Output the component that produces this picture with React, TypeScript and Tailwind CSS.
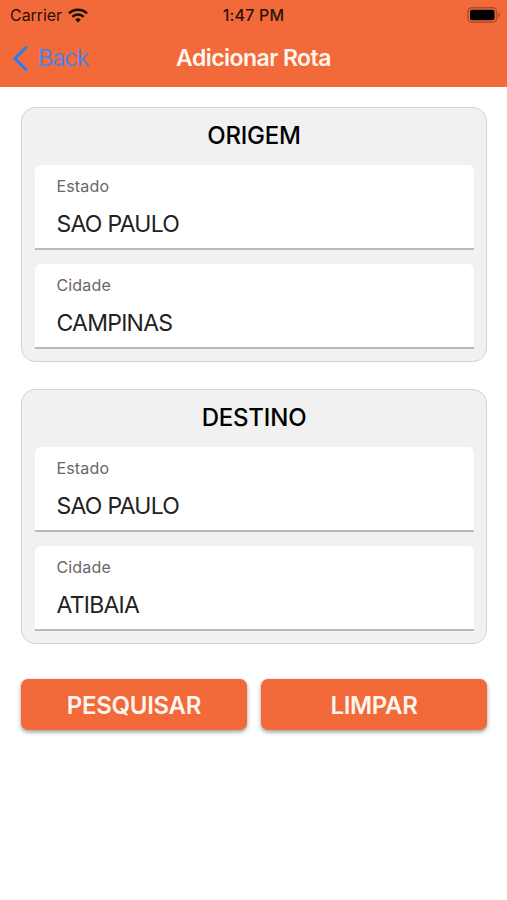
type FieldProps = { label: string; value: string };

function Field({ label, value }: FieldProps) {
  return (
    <div className="h-[85px] rounded-t-md border-b-2 border-[#b9b9b9] bg-white pl-[22px]">
      <p className="pt-[10px] text-base leading-[22px] text-[#686868]">
        <span className="tracking-[0.15px]">{label}</span>
      </p>
      <p className="pt-[12px] text-[23px] leading-[30px] text-[#222]">
        <span className="tracking-[-0.75px]">{value}</span>
      </p>
    </div>
  );
}

type RouteCardProps = { title: string; state: string; city: string };

function RouteCard({ title, state, city }: RouteCardProps) {
  return (
    <section className="h-[255px] rounded-[14px] border-[1.5px] border-[#d3d3d3] bg-[#f1f1f1] px-[12.5px]">
      <h2 className="flex h-[57px] items-center justify-center pb-[1px] text-2xl font-medium text-black">
        <span className="tracking-[-0.2px]">{title}</span>
      </h2>
      <div className="flex flex-col gap-[14px]">
        <Field label="Estado" value={state} />
        <Field label="Cidade" value={city} />
      </div>
    </section>
  );
}

function ActionButton({ label }: { label: string }) {
  return (
    <button className="h-[51px] w-[226px] rounded-[7px] bg-[#f26a3a] pt-[2px] text-2xl font-semibold text-[#fff4ee] shadow-[0_2px_4px_rgba(0,0,0,0.4)]">
      <span className="tracking-[-0.3px]">{label}</span>
    </button>
  );
}

function WifiIcon() {
  return (
    <svg className="h-[15px] w-[20px]" viewBox="0 0 20 15" fill="none" stroke="#180a05">
      <path d="M1 5.4C6 .6 14 .6 19 5.4" strokeWidth="2.5" />
      <path d="M4.3 8.8C7.5 5.8 12.5 5.8 15.7 8.8" strokeWidth="2.5" />
      <path d="M7.2 11.4Q10 9 12.8 11.4L10 14.4Z" fill="#180a05" stroke="none" />
    </svg>
  );
}

function BatteryIcon() {
  return (
    <svg className="h-[16px] w-[34px]" viewBox="0 0 34 16" fill="none">
      <rect x="1" y=".8" width="28.5" height="14.4" rx="4" stroke="#ac4c2a" strokeWidth="1.4" />
      <rect x="3" y="2.8" width="24.5" height="10.4" rx="2" fill="#000" />
      <path d="M31.2 5.6q1.8 .7 1.8 2.4t-1.8 2.4Z" fill="#ac4c2a" />
    </svg>
  );
}

export default function App() {
  return (
    <div className="min-h-[900px] w-[507px] bg-white font-['Inter','Liberation_Sans',sans-serif]">
      <header className="h-[87px] bg-[#f26a3a]">
        <div className="grid h-[30px] grid-cols-3 items-center text-base text-[#2a1209]">
          <div className="flex items-center gap-[6px] pl-[10px]">
            <span className="tracking-[-0.05px]">Carrier</span>
            <WifiIcon />
          </div>
          <p className="text-center font-medium">
            <span className="tracking-[0.2px]">1:47 PM</span>
          </p>
          <div className="flex justify-end pr-[6px]">
            <BatteryIcon />
          </div>
        </div>
        <div className="grid h-[57px] grid-cols-3 items-center">
          <a className="flex items-center gap-[9px] pl-[12px] text-[23px] text-[#5182e2]">
            <svg className="h-[28px] w-[17px]" viewBox="0 0 17 28" fill="none">
              <path d="M14 2.5L2.7 13.5L14 24.5" stroke="#217ff5" strokeWidth="3" strokeLinecap="round" strokeLinejoin="round" />
            </svg>
            <span className="tracking-[-0.8px]">Back</span>
          </a>
          <h1 className="text-center text-[23px] font-semibold whitespace-nowrap text-[#fff4ee]">
            <span className="tracking-[-0.55px]">Adicionar Rota</span>
          </h1>
        </div>
      </header>

      <main className="flex flex-col gap-[27px] pt-[20px] pr-[20px] pl-[21px]">
        <RouteCard title="ORIGEM" state="SAO PAULO" city="CAMPINAS" />
        <RouteCard title="DESTINO" state="SAO PAULO" city="ATIBAIA" />
        <div className="flex justify-between pt-[8px]">
          <ActionButton label="PESQUISAR" />
          <ActionButton label="LIMPAR" />
        </div>
      </main>
    </div>
  );
}
